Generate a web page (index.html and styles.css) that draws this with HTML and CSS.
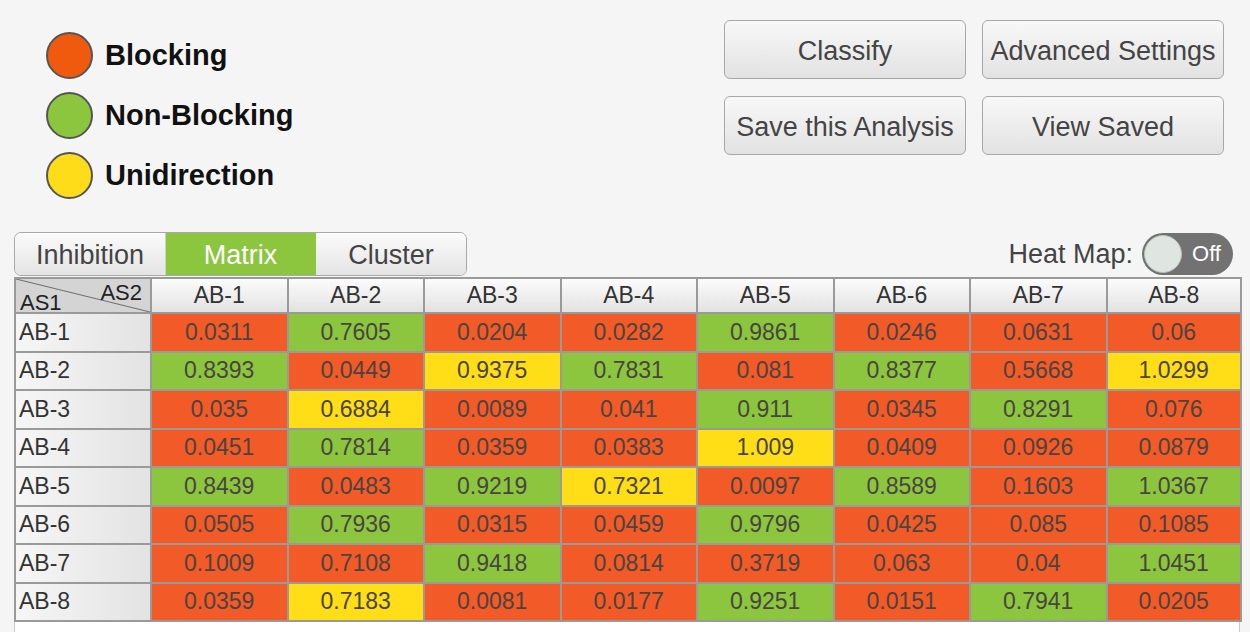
FILE: index.html
```html
<!DOCTYPE html>
<html>
<head>
<meta charset="utf-8">
<link rel="stylesheet" href="styles.css">
</head>
<body>
<div class="page">
  <div class="top">
    <ul class="legend">
      <li><span class="dot dot-red"></span>Blocking</li>
      <li><span class="dot dot-green"></span>Non-Blocking</li>
      <li><span class="dot dot-yellow"></span>Unidirection</li>
    </ul>
    <div class="actions">
      <button class="btn">Classify</button>
      <button class="btn">Advanced Settings</button>
      <button class="btn">Save this Analysis</button>
      <button class="btn">View Saved</button>
    </div>
  </div>
  <div class="toolbar">
    <div class="tabs">
      <button class="tab tab-1">Inhibition</button>
      <button class="tab tab-2 active">Matrix</button>
      <button class="tab tab-3">Cluster</button>
    </div>
    <div class="heat">
      <span class="heat-label">Heat Map:</span>
      <span class="toggle"><span class="knob"></span><span class="off">Off</span></span>
    </div>
  </div>
  <div class="grid-wrap">
    <table class="matrix">
      <colgroup>
        <col class="c-first"><col class="c"><col class="c"><col class="c"><col class="c"><col class="c"><col class="c"><col class="c"><col class="c-last">
      </colgroup>
      <thead>
        <tr>
          <th class="corner"><div class="corner-in"><span class="as1">AS1</span><span class="as2">AS2</span></div></th>
          <th>AB-1</th><th>AB-2</th><th>AB-3</th><th>AB-4</th><th>AB-5</th><th>AB-6</th><th>AB-7</th><th>AB-8</th>
        </tr>
      </thead>
      <tbody>
        <tr><th class="rh">AB-1</th><td class="r">0.0311</td><td class="g">0.7605</td><td class="r">0.0204</td><td class="r">0.0282</td><td class="g">0.9861</td><td class="r">0.0246</td><td class="r">0.0631</td><td class="r">0.06</td></tr>
        <tr><th class="rh">AB-2</th><td class="g">0.8393</td><td class="r">0.0449</td><td class="y">0.9375</td><td class="g">0.7831</td><td class="r">0.081</td><td class="g">0.8377</td><td class="r">0.5668</td><td class="y">1.0299</td></tr>
        <tr><th class="rh">AB-3</th><td class="r">0.035</td><td class="y">0.6884</td><td class="r">0.0089</td><td class="r">0.041</td><td class="g">0.911</td><td class="r">0.0345</td><td class="g">0.8291</td><td class="r">0.076</td></tr>
        <tr><th class="rh">AB-4</th><td class="r">0.0451</td><td class="g">0.7814</td><td class="r">0.0359</td><td class="r">0.0383</td><td class="y">1.009</td><td class="r">0.0409</td><td class="r">0.0926</td><td class="r">0.0879</td></tr>
        <tr><th class="rh">AB-5</th><td class="g">0.8439</td><td class="r">0.0483</td><td class="g">0.9219</td><td class="y">0.7321</td><td class="r">0.0097</td><td class="g">0.8589</td><td class="r">0.1603</td><td class="g">1.0367</td></tr>
        <tr><th class="rh">AB-6</th><td class="r">0.0505</td><td class="g">0.7936</td><td class="r">0.0315</td><td class="r">0.0459</td><td class="g">0.9796</td><td class="r">0.0425</td><td class="r">0.085</td><td class="r">0.1085</td></tr>
        <tr><th class="rh">AB-7</th><td class="r">0.1009</td><td class="r">0.7108</td><td class="g">0.9418</td><td class="r">0.0814</td><td class="r">0.3719</td><td class="r">0.063</td><td class="r">0.04</td><td class="g">1.0451</td></tr>
        <tr><th class="rh">AB-8</th><td class="r">0.0359</td><td class="y">0.7183</td><td class="r">0.0081</td><td class="r">0.0177</td><td class="g">0.9251</td><td class="r">0.0151</td><td class="g">0.7941</td><td class="r">0.0205</td></tr>
      </tbody>
    </table>
  </div>
</div>
</body>
</html>
```

FILE: styles.css
```css
* { box-sizing: border-box; }
html, body { margin: 0; padding: 0; }
body {
  background: #f5f5f5;
  font-family: "Liberation Sans", Arial, sans-serif;
  color: #444;
  width: 1250px;
  height: 632px;
  overflow: hidden;
}
.page { padding: 0 10px 0 14px; }

.top {
  height: 232px;
  display: flex;
  justify-content: space-between;
  align-items: flex-start;
}
.legend {
  list-style: none;
  margin: 0;
  padding: 25px 0 0 32px;
}
.legend li {
  height: 60px;
  display: flex;
  align-items: center;
  gap: 12px;
  font-size: 29px;
  font-weight: bold;
  color: #111;
}
.dot {
  width: 47px;
  height: 47px;
  border-radius: 50%;
  border: 2px solid #555;
  display: inline-block;
}
.dot-red { background: #f05a0f; }
.dot-green { background: #8cc63f; }
.dot-yellow { background: #ffdc1a; }

.actions {
  margin: 20px 16px 0 0;
  display: grid;
  grid-template-columns: 242px 242px;
  column-gap: 16px;
  row-gap: 17px;
}
.btn {
  height: 59px;
  border: 1px solid #a8a8a8;
  border-radius: 6px;
  background: linear-gradient(#f8f8f8, #e2e2e2);
  font-family: "Liberation Sans", Arial, sans-serif;
  font-size: 27px;
  color: #444;
  padding: 3px 0 0;
  white-space: nowrap;
}

.toolbar {
  height: 45px;
  display: flex;
  justify-content: space-between;
  align-items: flex-start;
}
.tabs {
  display: flex;
  height: 44px;
  border: 1px solid #a9a9a9;
  border-radius: 7px;
  overflow: hidden;
}
.tab {
  height: 100%;
  border: 0;
  border-right: 1px solid #cfcfcf;
  background: linear-gradient(#fbfbfb, #e4e4e4);
  font-family: "Liberation Sans", Arial, sans-serif;
  font-size: 27px;
  color: #444;
  padding: 2px 0 0;
}
.tab:last-child { border-right: 0; }
.tab-1 { width: 151px; }
.tab-2 { width: 150px; }
.tab-3 { width: 150px; }
.tab.active { background: #8cc63f; color: #fff; border-right-color: #8cc63f; }

.heat {
  display: flex;
  align-items: center;
  gap: 9px;
  height: 44px;
  margin-right: 7px;
}
.heat-label { font-size: 27px; color: #444; }
.toggle {
  width: 91px;
  height: 42px;
  border-radius: 21px;
  background: #727272;
  display: flex;
  align-items: center;
  justify-content: space-between;
  padding: 0 12px 0 2px;
}
.knob {
  width: 38px;
  height: 38px;
  border-radius: 50%;
  background: #dfe6e1;
  border: 1px solid #b9bfbb;
}
.off { color: #fff; font-size: 22px; }

.grid-wrap {
  background: #fff;
  box-shadow: inset 1px 0 #c9c9c9, inset -1px 0 #c9c9c9;
  height: 355px;
}
.matrix {
  width: 1226px;
  table-layout: fixed;
  border-collapse: collapse;
  font-size: 23px;
}
.c-first { width: 136px; }
.c { width: 136.5px; }
.c-last { width: 134.5px; }
.matrix th, .matrix td {
  border: 2px solid #9a9a9a;
  padding: 0;
  text-align: center;
  font-weight: normal;
  white-space: nowrap;
}
.matrix thead th {
  height: 35px;
  background: linear-gradient(#fcfcfc, #e2e2e2);
  color: #333;
}
.matrix tbody tr { height: 38.5px; }
.matrix td { color: #4a4440; }
.matrix th.rh {
  text-align: left;
  padding-left: 3px;
  background: linear-gradient(to right, #f6f6f6, #e3e3e3);
  color: #333;
}
.matrix thead th.corner {
  background: linear-gradient(to top right, #d4d4d4 calc(50% - 1px), #6f6f6f 50%, #d4d4d4 calc(50% + 1px));
  color: #222;
  font-size: 22px;
}
.corner-in {
  display: flex;
  justify-content: space-between;
  align-items: flex-start;
  padding: 0 8px 0 4px;
  height: 33px;
}
.as1 { padding-top: 11px; }
.as2 { padding-top: 1px; }
.r { background: #f25a28; }
.g { background: #8cc63f; }
.y { background: #ffdd17; }
```
